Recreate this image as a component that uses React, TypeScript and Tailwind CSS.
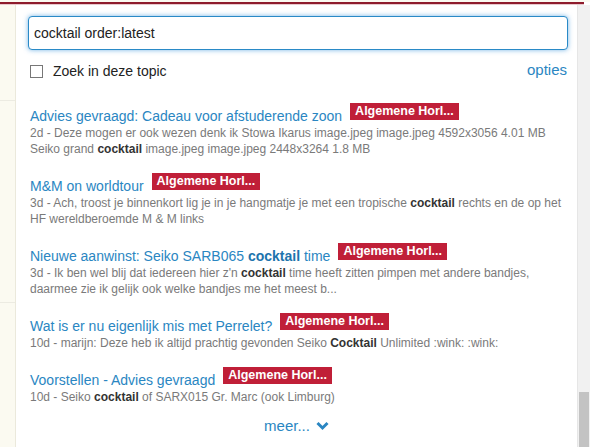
import React from "react";

type Part = { t: string; b?: boolean };

const RESULTS: { title: Part[]; desc: Part[] }[] = [
  {
    title: [{ t: "Advies gevraagd: Cadeau voor afstuderende zoon" }],
    desc: [
      { t: "2d - Deze mogen er ook wezen denk ik Stowa Ikarus image.jpeg image.jpeg 4592x3056 4.01 MB Seiko grand " },
      { t: "cocktail", b: true },
      { t: " image.jpeg image.jpeg 2448x3264 1.8 MB" },
    ],
  },
  {
    title: [{ t: "M&M on worldtour" }],
    desc: [
      { t: "3d - Ach, troost je binnenkort lig je in je hangmatje je met een tropische " },
      { t: "cocktail", b: true },
      { t: " rechts en de op het HF wereldberoemde M & M links" },
    ],
  },
  {
    title: [{ t: "Nieuwe aanwinst: Seiko SARB065 " }, { t: "cocktail", b: true }, { t: " time" }],
    desc: [
      { t: "3d - Ik ben wel blij dat iedereen hier z'n " },
      { t: "cocktail", b: true },
      { t: " time heeft zitten pimpen met andere bandjes, daarmee zie ik gelijk ook welke bandjes me het meest b..." },
    ],
  },
  {
    title: [{ t: "Wat is er nu eigenlijk mis met Perrelet?" }],
    desc: [
      { t: "10d - marijn: Deze heb ik altijd prachtig gevonden Seiko " },
      { t: "Cocktail", b: true },
      { t: " Unlimited :wink: :wink:" },
    ],
  },
  {
    title: [{ t: "Voorstellen - Advies gevraagd" }],
    desc: [
      { t: "10d - Seiko " },
      { t: "cocktail", b: true },
      { t: " of SARX015 Gr. Marc (ook Limburg)" },
    ],
  },
];

export default function App() {
  return (
    <div className="w-[590px] h-[447px] overflow-hidden bg-white flex flex-col font-['Liberation_Sans',Arial,sans-serif]">
      <div className="h-[2px] bg-[#fbfaf1]" />
      <div className="h-[2px] w-[584px] bg-[#8e1b2c]" />
      <div className="h-[1px] w-[584px] bg-[#e8c9cd]" />

      <div className="flex flex-1 min-h-0">
        {/* page behind the dropdown */}
        <div className="w-[16px] bg-[#fbfaf1] border-r border-[#ebe9dc] flex flex-col">
          <div className="h-[95px]" />
          <div className="h-px bg-[#ecebe2]" />
          <div className="h-[201px]" />
          <div className="h-px bg-[#ecebe2]" />
        </div>

        <div className="flex-1 bg-white flex flex-col">
          <div className="ml-[12px] mr-[9px] mt-[11px] h-[34px] rounded-[4px] border border-[#2a8ac7] shadow-[0_0_5px_rgba(60,150,220,0.7)] bg-white flex items-center px-[5px]">
            <span className="text-[14px] text-[#222]">cocktail order:latest</span>
          </div>

          <div className="flex items-center justify-between ml-[14px] mr-[10px] mt-[14px] h-[14px]">
            <label className="flex items-center gap-[10px]">
              <span className="w-[13px] h-[13px] border border-[#777] bg-white" />
              <span className="text-[14px] text-[#222]">Zoek in deze topic</span>
            </label>
            <span className="text-[15px] text-[#2a86c2] -mt-[2px]">opties</span>
          </div>

          <div className="flex flex-col gap-[20px] ml-[14px] mr-[6px] mt-[29px]">
            {RESULTS.map((r, i) => (
              <div key={i} className="flex flex-col">
                <div className="flex items-start h-[18px]">
                  <span className="text-[14px] leading-[18px] text-[#2a86c2] whitespace-nowrap">
                    {r.title.map((p, j) =>
                      p.b ? (
                        <b key={j} className="font-bold text-[#1d74ad]">{p.t}</b>
                      ) : (
                        <span key={j}>{p.t}</span>
                      )
                    )}
                  </span>
                  <span className="ml-[8px] -mt-[4px] h-[17px] px-[5px] bg-[#c01f38] text-white text-[12.5px] font-bold leading-[17px] whitespace-nowrap">
                    Algemene Horl...
                  </span>
                </div>
                <p className="text-[12px] leading-[16px] text-[#7a7a7a]">
                  {r.desc.map((p, j) =>
                    p.b ? (
                      <b key={j} className="font-bold text-[#333]">{p.t}</b>
                    ) : (
                      <span key={j}>{p.t}</span>
                    )
                  )}
                </p>
              </div>
            ))}
          </div>

          <div className="flex justify-center items-center gap-[6px] mt-[10px] text-[15px] text-[#2a86c2]">
            <span>meer...</span>
            <svg width="13" height="10" viewBox="0 0 13 10">
              <path d="M1.5 2 L6.5 7 L11.5 2" fill="none" stroke="#2a86c2" strokeWidth="3" />
            </svg>
          </div>
        </div>

        {/* scrollbar */}
        <div className="w-[13px] bg-[#f1f1f1] border-l border-[#e6e6e6] flex flex-col justify-end">
          <div className="h-[55px] mx-[1px] bg-[#c3c3c3]" />
        </div>
      </div>
    </div>
  );
}
